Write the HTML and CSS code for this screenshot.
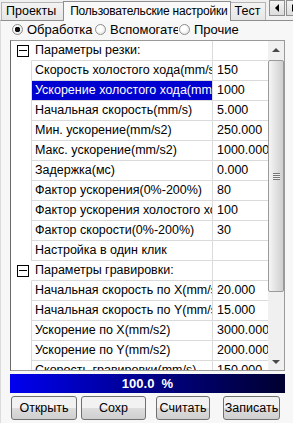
FILE: index.html
```html
<!DOCTYPE html>
<html lang="ru">

<head>
  <title>Пользовательские настройки</title>
  <link rel="stylesheet" href="styles.css">
</head>

<body>

  <div class="window">
    <div class="tabs">
      <div class="tab">Проекты</div>
      <div class="tab tab--active">Пользовательские настройки</div>
      <div class="tab">Тест</div>
      <div class="tab-arrows">
        <span class="arrow-btn"><i class="tri tri--left"></i></span>
        <span class="arrow-btn"><i class="tri tri--right"></i></span>
      </div>
    </div>

    <div class="panel">
      <div class="modes">
        <label class="mode"><span class="radio radio--on"></span>Обработка</label>
        <label class="mode"><span class="radio"></span><span class="clip">Вспомогате:</span></label>
        <label class="mode"><span class="radio"></span>Прочие</label>
      </div>

      <div class="grid">
        <div class="rows">
          <div class="row row--group"><span class="gutter"><i class="toggle"></i></span><span class="name">Параметры резки:</span><span class="value"></span></div>
          <div class="row"><span class="gutter"></span><span class="name">Скорость холостого хода(mm/s)</span><span class="value">150</span></div>
          <div class="row row--selected"><span class="gutter"></span><span class="name">Ускорение холостого хода(mm/s2)</span><span class="value">1000</span></div>
          <div class="row"><span class="gutter"></span><span class="name">Начальная скорость(mm/s)</span><span class="value">5.000</span></div>
          <div class="row"><span class="gutter"></span><span class="name">Мин. ускорение(mm/s2)</span><span class="value">250.000</span></div>
          <div class="row"><span class="gutter"></span><span class="name">Макс. ускорение(mm/s2)</span><span class="value">1000.000</span></div>
          <div class="row"><span class="gutter"></span><span class="name">Задержка(мс)</span><span class="value">0.000</span></div>
          <div class="row"><span class="gutter"></span><span class="name">Фактор ускорения(0%-200%)</span><span class="value">80</span></div>
          <div class="row"><span class="gutter"></span><span class="name">Фактор ускорения холостого хода</span><span class="value">100</span></div>
          <div class="row"><span class="gutter"></span><span class="name">Фактор скорости(0%-200%)</span><span class="value">30</span></div>
          <div class="row"><span class="gutter"></span><span class="name">Настройка в один клик</span><span class="value"></span></div>
          <div class="row row--group"><span class="gutter"><i class="toggle"></i></span><span class="name">Параметры гравировки:</span><span class="value"></span></div>
          <div class="row"><span class="gutter"></span><span class="name">Начальная скорость по X(mm/s)</span><span class="value">20.000</span></div>
          <div class="row"><span class="gutter"></span><span class="name">Начальная скорость по Y(mm/s)</span><span class="value">15.000</span></div>
          <div class="row"><span class="gutter"></span><span class="name">Ускорение по X(mm/s2)</span><span class="value">3000.000</span></div>
          <div class="row"><span class="gutter"></span><span class="name">Ускорение по Y(mm/s2)</span><span class="value">2000.000</span></div>
          <div class="row"><span class="gutter"></span><span class="name">Скорость гравировки(mm/s)</span><span class="value">150.000</span></div>
        </div>

        <div class="scrollbar">
          <span class="sb-btn"><i class="tri tri--up"></i></span>
          <div class="sb-track">
            <span class="sb-thumb"><i class="grip"></i></span>
          </div>
          <span class="sb-btn"><i class="tri tri--down"></i></span>
        </div>
      </div>

      <div class="progress">100.0  %</div>

      <div class="buttons">
        <button type="button" class="btn btn--open">Открыть</button>
        <button type="button" class="btn btn--save">Сохр</button>
        <button type="button" class="btn btn--read">Считать</button>
        <button type="button" class="btn btn--write">Записать</button>
      </div>
    </div>
  </div>

</body>

</html>
```

FILE: styles.css
```css
* {
  box-sizing: border-box;
}

body {
  margin: 0;
  background-color: #f0f0f0;
  font-family: "Liberation Sans", Arial, sans-serif;
  font-size: 12.5px;
  color: #000;
}

.window {
  inline-size: 293px;
  block-size: 423px;
  overflow: hidden;
}

/* вкладки */
.tabs {
  display: flex;
  align-items: flex-end;
  block-size: 20px;
}

.tab {
  flex: none;
  block-size: 18px;
  padding-inline: 4px 5px;
  line-height: 16px;
  white-space: nowrap;
  border: 1px solid #b5b5b5;
  border-block-end: 0;
  background: linear-gradient(#f3f3f3, #e6e6e6);
  margin-inline-end: -1px;

  &:first-child {
    margin-inline-start: 1px;
    padding-inline: 4px 7px;
  }
}

.tab--active {
  block-size: 20px;
  padding-inline: 6px 2px;
  line-height: 18px;
  font-size: 12px;
  letter-spacing: -0.2px;
  background: #f9f9f9;
  border-color: #8e8e8e;
  position: relative;
  z-index: 1;
  margin-block-end: -1px;
}

.tab-arrows {
  display: flex;
  gap: 1px;
  margin-inline-start: auto;
  margin-inline-end: -9px;
  align-self: flex-start;
}

.arrow-btn {
  display: grid;
  place-items: center;
  inline-size: 16px;
  block-size: 16px;
  border: 1px solid #8e8e8e;
  background: linear-gradient(#f4f4f4, #dcdcdc);
}

.tri {
  display: block;
  inline-size: 0;
  block-size: 0;
  border: 4px solid transparent;
}

.tri--left {
  border-right-color: #000;
  border-left-width: 0;
}

.tri--right {
  border-left-color: #000;
  border-right-width: 0;
}

.tri--up {
  border-bottom-color: #4a4a4a;
  border-top-width: 0;
}

.tri--down {
  border-top-color: #4a4a4a;
  border-bottom-width: 0;
}

/* панель */
.panel {
  border-block-start: 1px solid #8e8e8e;
  border-inline-start: 1px solid #dcdcdc;
  background-color: #f7f7f7;
  padding-inline: 9px 8px;
  block-size: 403px;
}

.modes {
  display: grid;
  grid-template-columns: 83px 84px auto;
  align-items: center;
  block-size: 16px;
  margin-block: 0 3px;
  padding-inline-start: 2px;
  font-size: 13px;
}

.mode {
  display: flex;
  align-items: center;
  gap: 4px;
  white-space: nowrap;
  overflow: hidden;
}

.clip {
  inline-size: 68px;
  overflow: hidden;
}

.radio {
  flex: none;
  inline-size: 11px;
  block-size: 11px;
  border-radius: 50%;
  border: 1px solid #8e8f8f;
  background: radial-gradient(circle at 40% 40%, #fff 30%, #d9d9d9);
}

.radio--on {
  background:
    radial-gradient(circle, #111 0 2.5px, transparent 3px),
    radial-gradient(circle at 40% 40%, #fff 30%, #d9d9d9);
}

/* таблица свойств */
.grid {
  display: flex;
  inline-size: 275px;
  block-size: 331px;
  border: 1px solid #9a9a9a;
  border-inline-start-color: #696969;
  background-color: #fff;
}

.rows {
  flex: 1;
  overflow: hidden;
}

.row {
  display: grid;
  grid-template-columns: 20px 181px 56px;
  block-size: 20px;
  line-height: 19px;

  span {
    white-space: nowrap;
    overflow: hidden;
  }
}

.gutter {
  display: flex;
  align-items: center;
  justify-content: center;
}

.name,
.value {
  border-block-end: 1px solid #dadada;
}

.name {
  border-inline-start: 1px solid #dadada;
  padding-inline-start: 3px;
}

.value {
  border-inline-start: 1px solid #dadada;
  padding-inline-start: 4px;
}

.row--group .name {
  border-inline-start-color: transparent;
}

.row--selected .name {
  background-color: #0000d0;
  color: #fff;
}

.toggle {
  display: block;
  position: relative;
  inline-size: 12px;
  block-size: 12px;
  border: 1px solid #000;
  margin-inline-start: 3px;

  &::after {
    content: '';
    position: absolute;
    inset-inline: 1px;
    inset-block-start: 4px;
    block-size: 1px;
    background-color: #000;
  }
}

.scrollbar {
  display: flex;
  flex-direction: column;
  inline-size: 16px;
  background-color: #f0f0f0;
}

.sb-btn {
  display: grid;
  place-items: center;
  block-size: 17px;
}

.sb-track {
  flex: 1;
  padding-block: 2px;
}

.sb-thumb {
  display: grid;
  place-items: center;
  block-size: 232px;
  border: 1px solid #9a9a9a;
  border-radius: 2px;
  background: linear-gradient(to right, #f5f5f5, #e2e2e2 50%, #cfcfcf);
}

.grip {
  display: block;
  inline-size: 7px;
  block-size: 7px;
  background: repeating-linear-gradient(#777 0 1px, #f0f0f0 1px 2px);
}

/* прогресс */
.progress {
  margin-block-start: 3px;
  inline-size: 275px;
  block-size: 19px;
  background: linear-gradient(to right, #0000f0, #00008a 50%, #000030);
  color: #fff;
  font-size: 13px;
  font-weight: bold;
  text-align: center;
  line-height: 19px;
  white-space: pre;
}

/* кнопки */
.buttons {
  display: flex;
  margin-block-start: 3px;
  padding-inline-start: 1px;
}

.btn {
  font: inherit;
  block-size: 24px;
  padding: 0;
  border: 1px solid #707070;
  border-radius: 3px;
  background: linear-gradient(#f2f2f2 50%, #dddddd 50%, #cfcfcf);
  color: #000;
}

.btn--open {
  inline-size: 66px;
}

.btn--save {
  inline-size: 65px;
  margin-inline-start: 4px;
}

.btn--read {
  inline-size: 54px;
  margin-inline-start: 10px;
}

.btn--write {
  inline-size: 57px;
  margin-inline-start: 13px;
}
```
